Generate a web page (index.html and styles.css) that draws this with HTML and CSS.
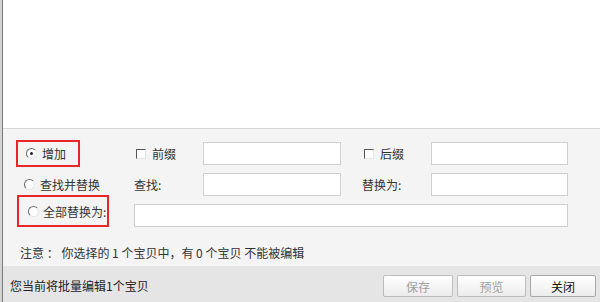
FILE: index.html
```html
<!DOCTYPE html>
<html lang="zh">
<head>
<meta charset="utf-8">
<link rel="stylesheet" href="styles.css">
</head>
<body>
<div class="window">
  <div class="preview"></div>
  <div class="form">
    <div class="grid">
      <label class="opt hl hl-add"><span class="radio checked"></span>增加</label>
      <label class="chk"><span class="box"></span>前缀</label>
      <span class="field"></span>
      <span></span>
      <label class="chk"><span class="box"></span>后缀</label>
      <span class="field"></span>

      <label class="opt"><span class="radio"></span>查找并替换</label>
      <span class="lbl">查找:</span>
      <span class="field"></span>
      <span></span>
      <span class="lbl">替换为:</span>
      <span class="field"></span>

      <label class="opt hl hl-all"><span class="radio"></span>全部替换为:</label>
      <span class="field wide"></span>
    </div>
    <p class="notice">注意 ： 你选择的 1 个宝贝中，有 0 个宝贝 不能被编辑</p>
  </div>
  <div class="footer">
    <span class="status">您当前将批量编辑1个宝贝</span>
    <div class="buttons">
      <button class="btn disabled save">保存</button>
      <button class="btn disabled prev">预览</button>
      <button class="btn close">关闭</button>
    </div>
  </div>
</div>
</body>
</html>
```

FILE: styles.css
```css
html, body {
  margin: 0;
  padding: 0;
  width: 600px;
  height: 302px;
  overflow: hidden;
  background: #f4f4f4;
  font-family: "Noto Sans CJK SC", "Noto Sans", sans-serif;
  font-size: 12px;
  color: #333;
}

.window {
  display: flex;
  flex-direction: column;
  height: 302px;
  border-left: 2px solid #d4d4d4;
  box-sizing: border-box;
  position: relative;
}
.window::before {
  content: "";
  position: absolute;
  left: 0;
  top: 0;
  bottom: 0;
  width: 1px;
  background: #7a7a7a;
}

.preview {
  height: 128px;
  background: #fff;
  border-bottom: 1px solid #d6d6d6;
  flex: none;
}

.form {
  flex: 1;
  background: #f4f4f4;
  padding: 9px 0 0 14px;
  display: flex;
  flex-direction: column;
}

.grid {
  display: grid;
  grid-template-columns: 118px 69px 138px 21px 69px 137px;
  grid-template-rows: 31px 31px 30px;
  align-items: center;
}

.opt {
  display: flex;
  align-items: center;
  gap: 5px;
  height: 100%;
  padding-left: 8px;
  box-sizing: border-box;
  color: #333;
  white-space: nowrap;
}
.hl {
  border: 2px solid #e8262a;
  padding-left: 8px;
  justify-self: start;
}
.hl-add {
  width: 64px;
  height: 27px;
  align-self: start;
  margin-top: 2px;
}
.hl-all {
  width: 92px;
  height: 32px;
  margin-left: 1px;
  padding-left: 9px;
  gap: 4px;
  align-self: start;
  margin-top: -5px;
}

.radio {
  width: 11px;
  height: 11px;
  border-radius: 50%;
  box-sizing: border-box;
  border: 1px solid;
  border-color: #6a6a6a #e6e6e6 #e6e6e6 #6a6a6a;
  background: #fff;
  position: relative;
  flex: none;
}
.radio.checked::after {
  content: "";
  position: absolute;
  left: 3px;
  top: 3px;
  width: 3px;
  height: 3px;
  border-radius: 50%;
  background: #222;
}

.chk {
  display: flex;
  align-items: center;
  gap: 6px;
  padding-left: 2px;
  white-space: nowrap;
}
.box {
  width: 10px;
  height: 10px;
  box-sizing: border-box;
  border: 1px solid;
  border-color: #555 #e4e4e4 #e4e4e4 #555;
  background: #fff;
  flex: none;
}

.lbl {
  white-space: nowrap;
}

.field {
  height: 23px;
  box-sizing: border-box;
  border: 1px solid #cfcfcf;
  background: #fff;
  display: block;
}
.field.wide {
  grid-column: 2 / 7;
}

.notice {
  margin: 14px 0 0 4px;
  color: #333;
}

.footer {
  flex: none;
  height: 36px;
  background: #e5e5e5;
  display: flex;
  align-items: center;
  justify-content: space-between;
  padding: 0 4px 0 8px;
}
.status {
  color: #222;
  margin-top: 2px;
}
.buttons {
  display: flex;
  gap: 4px;
  margin-top: 4px;
}
.btn {
  height: 22px;
  padding: 0;
  font-family: inherit;
  font-size: 12px;
  border: 1px solid #a8a8a8;
  border-radius: 2px;
  background: linear-gradient(#ffffff, #ececec);
  color: #111;
}
.btn.disabled {
  color: #a0a0a0;
  border-color: #bdbdbd;
}
.save { width: 70px; }
.prev { width: 69px; }
.close { width: 66px; }
```
